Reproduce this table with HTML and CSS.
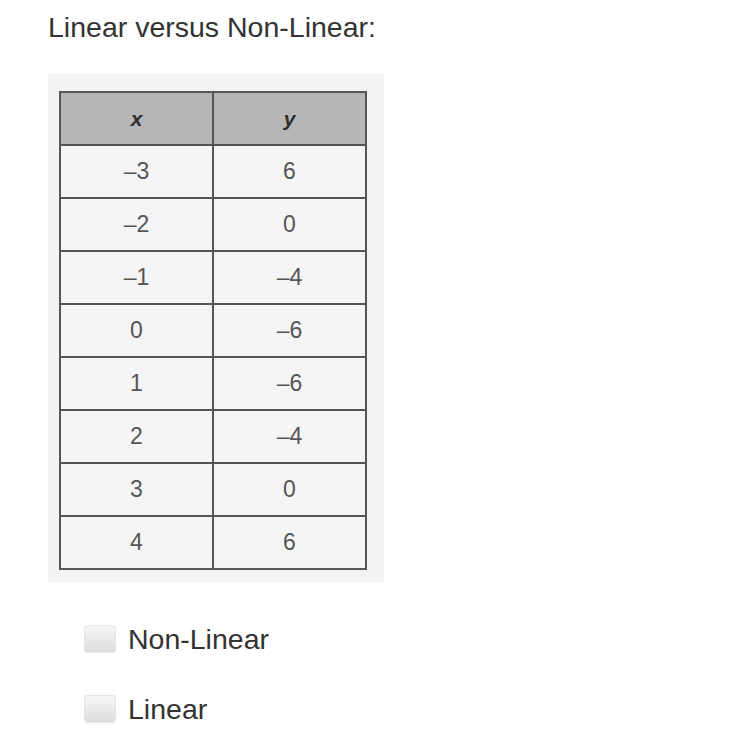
FILE: index.html
```html
<!DOCTYPE html>
<html>
<head>
<meta charset="utf-8">
<link rel="stylesheet" href="styles.css">
</head>
<body>
<div class="page">
  <h1 class="title">Linear versus Non-Linear:</h1>
  <div class="figure">
    <table class="tbl">
      <thead>
        <tr><th>x</th><th>y</th></tr>
      </thead>
      <tbody>
        <tr><td>&ndash;3</td><td>6</td></tr>
        <tr><td>&ndash;2</td><td>0</td></tr>
        <tr><td>&ndash;1</td><td>&ndash;4</td></tr>
        <tr><td>0</td><td>&ndash;6</td></tr>
        <tr><td>1</td><td>&ndash;6</td></tr>
        <tr><td>2</td><td>&ndash;4</td></tr>
        <tr><td>3</td><td>0</td></tr>
        <tr><td>4</td><td>6</td></tr>
      </tbody>
    </table>
  </div>
  <div class="options">
    <label class="option"><span class="box"></span><span class="label">Non-Linear</span></label>
    <label class="option"><span class="box"></span><span class="label">Linear</span></label>
  </div>
</div>
</body>
</html>
```

FILE: styles.css
```css
html, body {
  margin: 0;
  padding: 0;
  background: #ffffff;
}
.page {
  padding: 12px 0 0 48px;
  font-family: "Liberation Sans", Arial, sans-serif;
  color: #333333;
}
.title {
  margin: 0;
  font-size: 28.5px;
  font-weight: normal;
  line-height: 30px;
}
.figure {
  margin-top: 32px;
  width: 336px;
  height: 508px;
  box-sizing: border-box;
  padding: 17px 0 0 11px;
  background: #f3f3f3;
}
.tbl {
  border-collapse: collapse;
  width: 308px;
  font-family: "Liberation Sans", Arial, sans-serif;
  color: #555555;
}
.tbl th, .tbl td {
  border: 2px solid #555555;
  height: 51px;
  padding: 0;
  text-align: center;
  font-size: 23px;
  width: 50%;
}
.tbl th {
  background: #b6b6b6;
  color: #2e2e2e;
  font-style: italic;
  font-weight: bold;
  font-size: 21px;
}
.tbl td {
  background: #f5f5f5;
}
.options {
  margin-top: 42px;
  padding-left: 36px;
  display: flex;
  flex-direction: column;
  gap: 40px;
}
.option {
  display: flex;
  align-items: center;
  gap: 12px;
  height: 30px;
}
.box {
  width: 32px;
  height: 28px;
  border-radius: 4px;
  background: linear-gradient(#f7f7f7, #dcdcdc);
  box-shadow: inset 0 0 0 1px #e6e6e6;
}
.label {
  font-size: 28.5px;
  color: #333333;
}
```
